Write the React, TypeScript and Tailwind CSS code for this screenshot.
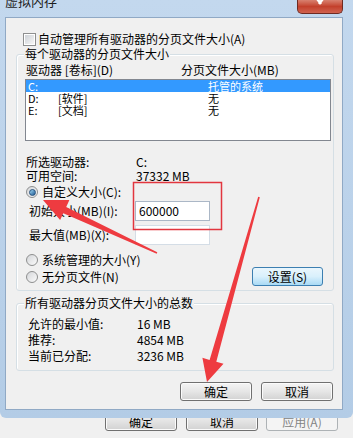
import type { ReactNode } from 'react';

const FONT = 'font-["Noto_Sans_CJK_SC","Microsoft_YaHei",sans-serif]';

type Pt = [number, number];

// tapered arrow: thin at tail, wide head at tip
function arrowPoints(tail: Pt, tip: Pt, headLen: number, headHalf: number, neck: number, end: number) {
  const dx = tip[0] - tail[0];
  const dy = tip[1] - tail[1];
  const len = Math.hypot(dx, dy);
  const ux = dx / len;
  const uy = dy / len;
  const nx = -uy;
  const ny = ux;
  const bx = tip[0] - ux * headLen;
  const by = tip[1] - uy * headLen;
  const pts: Pt[] = [
    [tail[0] + nx * end, tail[1] + ny * end],
    [bx + nx * neck, by + ny * neck],
    [bx + nx * headHalf, by + ny * headHalf],
    tip,
    [bx - nx * headHalf, by - ny * headHalf],
    [bx - nx * neck, by - ny * neck],
    [tail[0] - nx * end, tail[1] - ny * end],
  ];
  return pts.map((p) => `${p[0].toFixed(1)},${p[1].toFixed(1)}`).join(' ');
}

function Button({ children, className = '' }: { children: ReactNode; className?: string }) {
  return (
    <div
      className={`flex items-center justify-center rounded-[3px] border border-[#707070] bg-linear-to-b from-[#f4f4f4] via-[#e6e6e6] to-[#d2d2d2] shadow-[inset_0_0_0_1px_#fbfbfb] ${className}`}
    >
      {children}
    </div>
  );
}

function Radio({ checked = false }: { checked?: boolean }) {
  return (
    <div className="flex h-[12px] w-[12px] items-center justify-center rounded-full border border-[#8e8f8f] bg-linear-to-br from-[#d4d6d9] to-[#fbfbfb]">
      {checked && (
        <div className="h-[7px] w-[7px] rounded-full border border-[#25507c] bg-linear-to-br from-[#9fd8f5] to-[#1c5a92]" />
      )}
    </div>
  );
}

function GroupBox({ title, className = '', children }: { title: string; className?: string; children: ReactNode }) {
  return (
    <div className={`relative ml-[10px] w-[318px] rounded-[3px] border border-[#d5dfe5] shadow-[inset_1px_1px_0_#ffffff] ${className}`}>
      <span className="absolute -top-[8px] left-[7px] bg-[#f0f0f0] px-[1px]">{title}</span>
      {children}
    </div>
  );
}

const drives = [
  { d: 'C:', label: '', size: '托管的系统', selected: true },
  { d: 'D:', label: '[软件]', size: '无', selected: false },
  { d: 'E:', label: '[文档]', size: '无', selected: false },
];

export default function App() {
  return (
    <div className={`relative h-[438px] w-[353px] overflow-hidden bg-[#f0f0f0] text-[12px] leading-[14px] text-black ${FONT}`}>
      {/* window */}
      <div className="relative z-10 flex h-[418px] flex-col rounded-b-[6px] bg-linear-to-b from-[#c3d8ee] to-[#b3cce6]">
        {/* title bar */}
        <div className="flex h-[17px] items-start justify-between">
          <span className="-mt-[6px] ml-[5px] text-[13px] text-[#1e1e1e]">虚拟内存</span>
          <div className="mr-[10px] flex h-[14px] w-[46px] justify-center rounded-b-[5px] border border-t-0 border-[#6e2a22] bg-linear-to-b from-[#d8806f] via-[#c3402c] to-[#d0624f]">
            <svg width="14" height="6" viewBox="0 0 14 6">
              <path d="M2 -4 L8 4 M12 -4 L6 4" stroke="#ffffff" strokeWidth="2.5" />
            </svg>
          </div>
        </div>

        {/* dialog body */}
        <div className="ml-[5px] mr-[10px] flex h-[393px] flex-col border border-[#90a9c5] bg-[#f0f0f0]">
          <div className="mt-[14px] flex h-[14px] items-center pl-[17px]">
            <div className="h-[13px] w-[13px] border border-[#8e8f8f] bg-white p-[1px]">
              <div className="h-full w-full bg-linear-to-br from-[#cdd1d6] to-[#f7f7f7]" />
            </div>
            <span className="ml-[2px]">自动管理所有驱动器的分页文件大小(A)</span>
          </div>

          <GroupBox title="每个驱动器的分页文件大小" className="mt-[8px] h-[237px]">
            <div className="mt-[8px] flex h-[14px] pl-[9px]">
              <span className="w-[155px]">驱动器 [卷标](D)</span>
              <span>分页文件大小(MB)</span>
            </div>
            <div className="ml-[8px] mt-[2px] h-[62px] w-[306px] border border-[#828790] bg-white">
              {drives.map((r) => (
                <div
                  key={r.d}
                  className={`flex h-[12px] items-center text-[11px] leading-[12px] ${r.selected ? 'bg-[#3399ff] text-white' : ''}`}
                >
                  <span className="w-[32px] pl-[2px]">{r.d}</span>
                  <span className="w-[150px]">{r.label}</span>
                  <span>{r.size}</span>
                </div>
              ))}
            </div>

            <div className="mt-[14px] pl-[9px]">
              <div className="flex h-[14px]">
                <span className="w-[110px]">所选驱动器:</span>
                <span>C:</span>
              </div>
              <div className="flex h-[14px]">
                <span className="w-[110px]">可用空间:</span>
                <span>37332 MB</span>
              </div>
            </div>

            <div className="mt-[2px] flex h-[14px] items-center pl-[9px]">
              <Radio checked />
              <span className="ml-[4px]">自定义大小(C):</span>
            </div>
            <div className="mt-[2px] flex h-[20px] items-center pl-[12px]">
              <span className="w-[106px]">初始大小(MB)(I):</span>
              <div className="flex h-[20px] w-[75px] items-center border border-[#abb7c6] bg-white pl-[3px]">600000</div>
            </div>
            <div className="mt-[4px] flex h-[20px] items-center pl-[12px]">
              <span className="w-[106px]">最大值(MB)(X):</span>
              <div className="h-[20px] w-[75px] border border-[#d4dde6] bg-white" />
            </div>

            <div className="mt-[8px] flex justify-between pl-[9px] pr-[10px]">
              <div className="flex flex-col gap-[3px]">
                <div className="flex h-[14px] items-center">
                  <Radio />
                  <span className="ml-[4px]">系统管理的大小(Y)</span>
                </div>
                <div className="flex h-[14px] items-center">
                  <Radio />
                  <span className="ml-[4px]">无分页文件(N)</span>
                </div>
              </div>
              <div className="mt-[14px] flex h-[19px] w-[71px] items-center justify-center rounded-[3px] border border-[#3c7fb1] bg-linear-to-b from-[#eaf6fd] via-[#d9f0fc] to-[#a9daf5]">
                设置(S)
              </div>
            </div>
          </GroupBox>

          <GroupBox title="所有驱动器分页文件大小的总数" className="mt-[12px] h-[68px]">
            <div className="pl-[11px] pt-[12px]">
              <div className="flex h-[16px] items-center">
                <span className="w-[109px]">允许的最小值:</span>
                <span>16 MB</span>
              </div>
              <div className="flex h-[16px] items-center">
                <span className="w-[109px]">推荐:</span>
                <span>4854 MB</span>
              </div>
              <div className="flex h-[16px] items-center">
                <span className="w-[109px]">当前已分配:</span>
                <span>3236 MB</span>
              </div>
            </div>
          </GroupBox>

          <div className="mr-[9px] mt-[11px] flex justify-end gap-[9px]">
            <Button className="h-[19px] w-[72px]">确定</Button>
            <Button className="h-[19px] w-[72px]">取消</Button>
          </div>
        </div>
      </div>

      {/* parent dialog buttons, partly behind the window */}
      <div className="-mt-[9px] flex pl-[105px]">
        <Button className="h-[22px] w-[72px] pt-[4px]">确定</Button>
        <Button className="ml-[9px] h-[22px] w-[72px] pt-[4px]">取消</Button>
        <div className="ml-[8px] flex h-[22px] w-[72px] items-center justify-center rounded-[3px] border border-[#adb2b5] bg-[#f4f4f4] pt-[4px] text-[#838383]">
          应用(A)
        </div>
      </div>

      {/* red annotations */}
      <svg className="pointer-events-none absolute left-0 top-0 z-20" width="353" height="438" viewBox="0 0 353 438">
        <rect x="133.5" y="182.5" width="88" height="47" fill="none" stroke="#e2363f" strokeWidth="1.5" />
        <polygon points={arrowPoints([157, 253], [43, 200], 24, 11, 3.5, 0.8)} fill="#ee3b40" />
        <polygon points={arrowPoints([259, 197], [207, 382], 22, 11, 3.5, 0.8)} fill="#ee3b40" />
      </svg>
    </div>
  );
}
